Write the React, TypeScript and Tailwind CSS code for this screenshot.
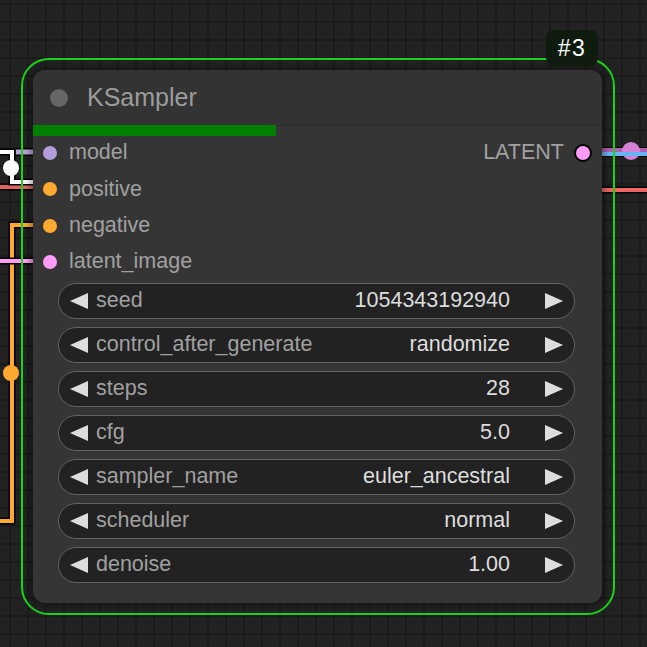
import React from 'react';

const slots = [
  { name: 'model', color: 'bg-[#b39ddb]' },
  { name: 'positive', color: 'bg-[#ffa931]' },
  { name: 'negative', color: 'bg-[#ffa931]' },
  { name: 'latent_image', color: 'bg-[#ff9cf9]' },
];

const widgets = [
  { label: 'seed', value: '1054343192940' },
  { label: 'control_after_generate', value: 'randomize' },
  { label: 'steps', value: '28' },
  { label: 'cfg', value: '5.0' },
  { label: 'sampler_name', value: 'euler_ancestral' },
  { label: 'scheduler', value: 'normal' },
  { label: 'denoise', value: '1.00' },
];

const Arrow = ({ dir }: { dir: 'left' | 'right' }) => (
  <svg width="18" height="16" viewBox="0 0 18 16" className="shrink-0">
    {dir === 'left' ? (
      <polygon points="18,0 18,16 0,8" fill="#dddddd" />
    ) : (
      <polygon points="0,0 0,16 18,8" fill="#dddddd" />
    )}
  </svg>
);

const Wires = () => (
  <svg width="647" height="647" className="absolute inset-0">
    {/* left side links */}
    <path d="M-5 187 H33" stroke="#000" strokeWidth="7" fill="none" />
    <path d="M-5 187 H33" stroke="#e06464" strokeWidth="4" fill="none" />
    <path d="M16 152 H33" stroke="#000" strokeWidth="8" fill="none" />
    <path d="M16 152 H33" stroke="#b7a5d8" strokeWidth="5" fill="none" />
    <path d="M-5 152 H12 V182 H33" stroke="#000" strokeWidth="7" fill="none" />
    <path d="M-5 152 H12 V182 H33" stroke="#fff" strokeWidth="4" fill="none" />
    <circle cx="11" cy="168" r="8" fill="#fff" />
    <path d="M33 225 H12 V521 H-5" stroke="#000" strokeWidth="7" fill="none" />
    <path d="M33 225 H12 V521 H-5" stroke="#ffa931" strokeWidth="4" fill="none" />
    <circle cx="11" cy="373" r="8" fill="#ffa931" />
    <path d="M-5 261 H33" stroke="#000" strokeWidth="7" fill="none" />
    <path d="M-5 261 H33" stroke="#ff9cf9" strokeWidth="4" fill="none" />
    {/* right side links */}
    <path d="M602 152 H650" stroke="#000" strokeWidth="10" fill="none" />
    <path d="M602 151 H650" stroke="#b060b0" strokeWidth="6" fill="none" />
    <circle cx="631" cy="151" r="9" fill="#d880d8" />
    <path d="M602 154 H650" stroke="#64b5f6" strokeWidth="4" fill="none" />
    <path d="M602 190 H650" stroke="#000" strokeWidth="7" fill="none" />
    <path d="M602 190 H650" stroke="#f06464" strokeWidth="4" fill="none" />
  </svg>
);

const App = () => {
  return (
    <div className="relative w-[647px] h-[647px] overflow-hidden bg-[#222222] bg-[linear-gradient(to_right,#1b1b1b_2px,transparent_2px),linear-gradient(to_bottom,#1b1b1b_2px,transparent_2px)] bg-[size:18px_18px] bg-[position:9px_3px] font-['Liberation_Sans',Arial,sans-serif]">
      <Wires />

      {/* selection outline */}
      <div className="absolute left-[21px] top-[58px] w-[594px] h-[557px] rounded-[28px] border-2 border-[#18d418] p-[10px]">
        {/* node */}
        <div className="flex flex-col w-[569px] h-[533px] rounded-[12px] bg-[#353535] shadow-[0_0_6px_3px_rgba(0,0,0,0.35)]">
          <div className="flex items-center h-[55px] pl-[17px] gap-[19px] rounded-t-[12px] bg-[#333333]">
            <div className="w-[18px] h-[18px] rounded-full bg-[#666666]" />
            <span className="text-[25px] text-[#9c9c9c] leading-none">KSampler</span>
          </div>
          <div className="flex h-[11px]">
            <div className="w-[243px] bg-[#008000]" />
            <div className="flex-1 border-t border-[#2b2b2b]" />
          </div>

          <div className="flex flex-col -mt-[1px]">
            {slots.map((s, i) => (
              <div key={s.name} className="flex items-center justify-between h-[36.3px] px-[10px]">
                <div className="flex items-center gap-[12px]">
                  <div className={`w-[14px] h-[14px] rounded-full ${s.color}`} />
                  <span className="text-[21.5px] text-[#a0a0a0] leading-none">{s.name}</span>
                </div>
                {i === 0 && (
                  <div className="flex items-center gap-[10px]">
                    <span className="text-[21.5px] text-[#a0a0a0] leading-none">LATENT</span>
                    <div className="w-[18px] h-[18px] rounded-full bg-[#ff9cf9] border-2 border-black" />
                  </div>
                )}
              </div>
            ))}
          </div>

          <div className="flex flex-col gap-[8px] mt-[3px] pl-[25px] pr-[27px]">
            {widgets.map((w) => (
              <div
                key={w.label}
                className="flex items-center h-[36px] rounded-full border-[1.5px] border-[#626262] bg-[#222222] pl-[11px] pr-[11px]"
              >
                <Arrow dir="left" />
                <span className="ml-[8px] text-[21.5px] text-[#a0a0a0] leading-none">{w.label}</span>
                <span className="ml-auto text-[21.5px] text-[#dddddd] leading-none">{w.value}</span>
                <div className="ml-[35px]">
                  <Arrow dir="right" />
                </div>
              </div>
            ))}
          </div>
        </div>
      </div>

      {/* node id badge */}
      <div className="absolute left-[546px] top-[30px] w-[52px] h-[36px] rounded-[8px] bg-[#0f1b0f] flex items-center justify-center">
        <span className="text-[23px] text-white leading-none tracking-[1.5px]">#3</span>
      </div>
    </div>
  );
};

export default App;
